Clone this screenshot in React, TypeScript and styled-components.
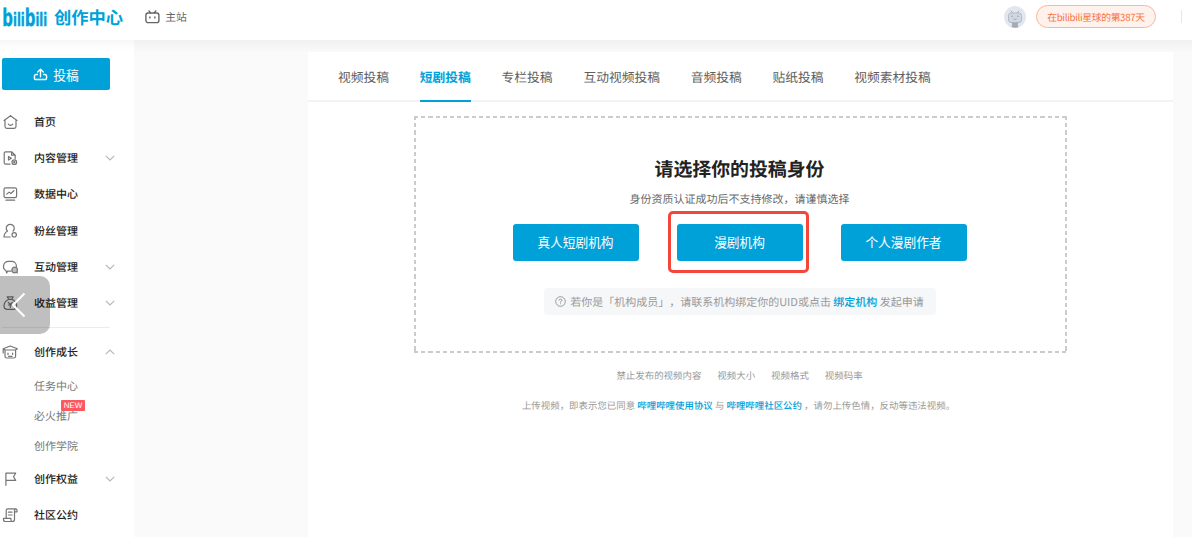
import React from "react";
import styled, { createGlobalStyle, css } from "styled-components";

const blue = "#00a1d9";

const GlobalStyle = createGlobalStyle`
  * { box-sizing: border-box; }
  body {
    margin: 0;
    overflow: hidden;
    background: #fafafa;
    font-family: "Noto Sans CJK SC", "Liberation Sans", sans-serif;
    text-rendering: geometricPrecision;
    text-spacing-trim: space-all;
  }
`;

const Page = styled.div`
  position: relative;
  display: flex;
  flex-direction: column;
  width: 1192px;
  height: 537px;
  overflow: hidden;
`;

const Header = styled.header`
  display: flex;
  align-items: center;
  flex: 0 0 40px;
  height: 40px;
  padding: 0 10px 7px 2px;
  background: #fff;
`;

const Logo = styled.div`
  display: flex;
  align-items: center;
  color: ${blue};
`;

const LogoName = styled.span`
  margin-left: 3px;
  font-size: 17.3px;
  font-weight: 700;
  line-height: 24px;
  white-space: nowrap;
`;

const MainSite = styled.a`
  display: flex;
  align-items: center;
  gap: 5px;
  margin-left: 22px;
  color: #666;
  font-size: 10.8px;
  line-height: 16px;
`;

const HeaderRight = styled.div`
  display: flex;
  align-items: center;
  margin-left: auto;
`;

const DayBadge = styled.span`
  display: flex;
  align-items: center;
  justify-content: center;
  width: 120px;
  height: 23px;
  margin-left: 10px;
  border: 1px solid #fbb599;
  border-radius: 12px;
  background: #fff1ec;
  color: #f8743f;
  font-size: 9.8px;
  letter-spacing: -0.35px;
  white-space: nowrap;
`;

const HeaderDivider = styled.span`
  width: 1px;
  height: 13px;
  margin-left: 25px;
  background: #e7e7e7;
`;

const Body = styled.div`
  display: flex;
  flex: 1;
  min-height: 0;
  background: linear-gradient(#f1f1f1, #fafafa 13px);
`;

const Sidebar = styled.aside`
  flex: 0 0 134px;
  padding: 18px 16px 0 2px;
  background: linear-gradient(#f7f7f7, #fff 10px);
`;

const SubmitButton = styled.button`
  display: flex;
  align-items: center;
  justify-content: center;
  gap: 5px;
  width: 108px;
  height: 32px;
  margin: 0 0 13.5px;
  padding: 0;
  border: 0;
  border-radius: 2px;
  background: ${blue};
  color: #fff;
  font-family: inherit;
  font-size: 12.8px;
`;

const NavItem = styled.div`
  display: flex;
  align-items: center;
  height: 36.3px;
  color: #222;
  font-size: 11px;
  font-weight: 500;
`;

const NavIcon = styled.span`
  display: flex;
  width: 32px;
  color: #757575;
`;

const Arrow = styled.span`
  display: flex;
  margin-left: auto;
  margin-right: 3px;
  color: #b5b5b5;
`;

const NavRule = styled.div`
  width: 108px;
  height: 1px;
  margin: 6px 0 6px;
  background: #ececec;
`;

const SubNav = styled.div`
  padding-left: 32px;
`;

const SubItem = styled.div`
  position: relative;
  display: flex;
  align-items: center;
  width: 46px;
  height: 30px;
  color: #777;
  font-size: 11px;
`;

const NewTag = styled.span`
  position: absolute;
  left: 27px;
  top: -1px;
  width: 24px;
  height: 11px;
  border-radius: 1px;
  background: #fb595f;
  color: #fff;
  font-family: "Liberation Sans", sans-serif;
  font-size: 8px;
  line-height: 11px;
  text-align: center;
`;

const Main = styled.main`
  flex: 1;
  padding: 12px 19px 0 174px;
`;

const Panel = styled.section`
  display: flex;
  flex-direction: column;
  align-items: center;
  height: 100%;
  background: #fff;
`;

const Tabs = styled.nav`
  display: flex;
  gap: 30.8px;
  width: 100%;
  height: 50px;
  padding-left: 30px;
  border-bottom: 2px solid #f3f3f3;
`;

const Tab = styled.a<{ $active?: boolean }>`
  height: 50px;
  border-bottom: 2px solid transparent;
  color: #606060;
  font-size: 12.75px;
  line-height: 50px;
  white-space: nowrap;
  ${({ $active }) =>
    $active &&
    css`
      border-bottom-color: ${blue};
      color: ${blue};
      font-weight: 700;
    `}
`;

const dashX = "repeating-linear-gradient(90deg, #cbcbcb 0 4.2px, transparent 4.2px 7.2px)";
const dashY = "repeating-linear-gradient(180deg, #cbcbcb 0 4.2px, transparent 4.2px 7.2px)";

const IdentityBox = styled.div`
  display: flex;
  flex-direction: column;
  align-items: center;
  width: 653px;
  height: 237px;
  margin-top: 14px;
  padding: 38px 2px 0 0;
  background:
    ${dashX} top / 100% 2px no-repeat,
    ${dashX} bottom / 100% 2px no-repeat,
    ${dashY} left / 2px 100% no-repeat,
    ${dashY} right / 2px 100% no-repeat;
`;

const Title = styled.h1`
  margin: 0;
  color: #222;
  font-size: 18.9px;
  font-weight: 700;
  line-height: 30px;
`;

const Subtitle = styled.p`
  margin: 6px 0 0;
  color: #6a6a6a;
  font-size: 11px;
  line-height: 18px;
`;

const Choices = styled.div`
  display: flex;
  gap: 38px;
  margin-top: 15.5px;
`;

const ChoiceButton = styled.button`
  position: relative;
  width: 126px;
  height: 37px;
  padding: 0 0 1px;
  border: 0;
  border-radius: 3px;
  background: ${blue};
  color: #fff;
  font-family: inherit;
  font-size: 12.7px;
`;

const Highlight = styled.span`
  position: absolute;
  inset: -13px -6px -12px -9px;
  border: 3px solid #f4473a;
  border-radius: 5px;
`;

const Notice = styled.div`
  display: flex;
  align-items: center;
  justify-content: center;
  width: 392px;
  height: 27px;
  margin-top: 27.5px;
  border-radius: 3px;
  background: #f6f7f9;
  color: #999;
  font-size: 11px;
  white-space: pre;
  svg { margin-right: 4px; }
`;

const BlueLink = styled.a`
  color: ${blue};
  font-weight: 500;
`;

const Rules = styled.div`
  display: flex;
  gap: 16px;
  margin-top: 13.5px;
  padding-right: 2px;
  color: #999;
  font-size: 9.45px;
  line-height: 16px;
`;

const Terms = styled.p`
  margin: 14px 0 0;
  padding-right: 4px;
  color: #999;
  font-size: 9.45px;
  line-height: 16px;
  white-space: pre;
`;

const BackOverlay = styled.button`
  position: absolute;
  left: 0;
  top: 276px;
  display: flex;
  align-items: center;
  width: 50px;
  height: 58px;
  padding: 0 0 0 10px;
  border: 0;
  border-radius: 0 10px 10px 0;
  background: rgba(0, 0, 0, 0.25);
  color: #fff;
`;

const Svg = ({ children, size = 16, w = 1.2 }: { children: React.ReactNode; size?: number; w?: number }) => (
  <svg width={size} height={size} viewBox="0 0 16 16" fill="none" stroke="currentColor" strokeWidth={w} strokeLinecap="round" strokeLinejoin="round">
    {children}
  </svg>
);

const icons = {
  home: <><path d="M8.5 1.7 2 6.5h1V12.5q0 1.8 1.8 1.8h7.4q1.8 0 1.8-1.8V6.5h1L8.5 1.7" /><path d="M6.3 10.2q2.2 2.4 4.4 0" /></>,
  content: <><path d="M8 14.2H3.6Q2.2 14.2 2.2 12.8V3.2Q2.2 1.8 3.6 1.8h6L13.2 5.2v3.4M9.6 1.8v3.4h3.6M6.5 6.5v3.6l2.8-1.8z" /><circle cx="12.3" cy="12.2" r="2.3" /><circle cx="12.3" cy="12.2" r=".6" /></>,
  data: <><rect x="2" y="1.9" width="12.6" height="9.8" rx="1.6" /><path d="m4.7 8.1 2.4-2 1.8 1.4 3-2.8M4 14.2h8.7" /></>,
  fans: <><path d="M5.5 8.2A4 4 0 1 1 11 8.2M5.5 8.2Q2.1 9.8 2 14h6.2" /><circle cx="12.2" cy="11.8" r="2.2" /></>,
  chat: <><path d="M5.5 12.2 4.7 14 3.9 11.6A5 5 0 0 1 5.8 2.4h4.4a4.8 4.8 0 0 1 4.2 5M5.5 12.2h3.4" /><circle cx="12.7" cy="11" r="2.8" fill="#bdbdbd" /><path d="m14.2 13.2 1.2.8" /></>,
  money: <><path d="M5.2 1.8h6L9.8 4.3H6.7zM6.7 4.3Q2 6.6 2 11q0 3.3 3.5 3.3h5.7q3.5 0 3.5-3.3 0-4.5-4.9-6.7" /><path d="m6.3 7.3 2 2.2 2-2.2M8.3 9.5v3M6.4 10h3.8" /></>,
  growth: <><path d="M1.2 4.8 8.2 2l7.2 2.8-2 1.2H3.2zM3 6.2v6q0 1.8 1.8 1.8h7q1.8 0 1.8-1.8v-6M6 9.2v1.2M10.6 9.2v1.2M6.5 12.3h3.6M1.2 5v4" /></>,
  flag: <path d="M3.9 14.3V2.2h9.8l-2.2 3.6 2.2 3.6H3.9" />,
  rules: <path d="M4.2 11.2V3.3q0-1.5 1.5-1.5h8q1.3 0 1.3 1.5v1.5h-2.5M13.7 1.8q-1.2.2-1.2 2v8.7q0 2-2 2H3.2q-1.7 0-1.7-1.7v-1.4h7.4v1.4q0 1.7 1.6 1.7M6.4 5.2H10M6.4 8H10" />,
};

const Chevron = ({ up }: { up?: boolean }) => (
  <Arrow>
    <svg width="10" height="6" viewBox="0 0 10 6" fill="none" stroke="currentColor" strokeWidth="1.1">
      <path d={up ? "M.8 5.2 5 1l4.2 4.2" : "M.8.8 5 5 9.2.8"} />
    </svg>
  </Arrow>
);

const Item = ({ icon, label, arrow }: { icon: keyof typeof icons; label: string; arrow?: "up" | "down" }) => (
  <NavItem>
    <NavIcon><Svg>{icons[icon]}</Svg></NavIcon>
    {label}
    {arrow && <Chevron up={arrow === "up"} />}
  </NavItem>
);

const tabs = ["视频投稿", "短剧投稿", "专栏投稿", "互动视频投稿", "音频投稿", "贴纸投稿", "视频素材投稿"];

export default function App() {
  return (
    <>
      <GlobalStyle />
      <Page>
        <Header>
          <Logo>
            <svg width="49" height="26" viewBox="0 0 49 26" overflow="visible">
              <text transform="translate(.3 22.2) scale(.62 1)" fill="currentColor" stroke="currentColor" strokeWidth=".4" fontFamily="DejaVu Sans" fontWeight="700" fontSize="18.5">
                <tspan fontSize="24">b</tspan>ili<tspan fontSize="24">b</tspan>ili
              </text>
            </svg>
            <LogoName>创作中心</LogoName>
          </Logo>
          <MainSite>
            <svg width="15" height="14" viewBox="0 0 15 14" fill="none" stroke="#666" strokeWidth="1.4" strokeLinecap="round">
              <rect x=".9" y="3" width="13" height="9.6" rx="2.2" />
              <path d="m4 .9 1.4 1.8M10.8.9 9.4 2.7M4.9 7v1M9.9 7v1" />
            </svg>
            主站
          </MainSite>
          <HeaderRight>
            <svg width="22" height="22" viewBox="0 0 22 22">
              <circle cx="11" cy="11" r="11" fill="#e2e6ef" />
              <rect x="4.5" y="7" width="13" height="9.5" rx="2.5" fill="#d1d7e0" stroke="#b4bcc8" />
              <path d="m7 4.8 1.5 2M15 4.8l-1.5 2M7 10.5l2-.5M15 10.5l-2-.5M9.5 13q1.5 1 3 0" fill="none" stroke="#a4adba" />
              <path d="M7.5 16.5h7l-.8 1.8.8 2.8q-3.5 1.4-7 0l.8-2.8z" fill="#a3abb6" />
            </svg>
            <DayBadge>在bilibili星球的第387天</DayBadge>
            <HeaderDivider />
          </HeaderRight>
        </Header>
        <Body>
          <Sidebar>
            <SubmitButton>
              <Svg size={15} w={1.5}>
                <path d="M8 10.5V2.8M5 5.4l3-2.9 3 2.9M4.7 8H3.4Q1.5 8 1.5 10v1.4q0 2 2 2h9q2 0 2-2V10q0-2-1.9-2h-1.3" />
              </Svg>
              投稿
            </SubmitButton>
            <Item icon="home" label="首页" />
            <Item icon="content" label="内容管理" arrow="down" />
            <Item icon="data" label="数据中心" />
            <Item icon="fans" label="粉丝管理" />
            <Item icon="chat" label="互动管理" arrow="down" />
            <Item icon="money" label="收益管理" arrow="down" />
            <NavRule />
            <Item icon="growth" label="创作成长" arrow="up" />
            <SubNav>
              <SubItem>任务中心</SubItem>
              <SubItem>必火推广<NewTag>NEW</NewTag></SubItem>
              <SubItem>创作学院</SubItem>
            </SubNav>
            <Item icon="flag" label="创作权益" arrow="down" />
            <Item icon="rules" label="社区公约" />
          </Sidebar>
          <Main>
            <Panel>
              <Tabs>
                {tabs.map((t) => <Tab key={t} $active={t === "短剧投稿"}>{t}</Tab>)}
              </Tabs>
              <IdentityBox>
                <Title>请选择你的投稿身份</Title>
                <Subtitle>身份资质认证成功后不支持修改，请谨慎选择</Subtitle>
                <Choices>
                  <ChoiceButton>真人短剧机构</ChoiceButton>
                  <ChoiceButton>漫剧机构<Highlight /></ChoiceButton>
                  <ChoiceButton>个人漫剧作者</ChoiceButton>
                </Choices>
                <Notice>
                  <svg width="11" height="11" viewBox="0 0 11 11" fill="none" stroke="#999">
                    <circle cx="5.5" cy="5.5" r="4.8" />
                    <path d="M4 4.5q0-1.3 1.5-1.3T7 4.4Q7 5.2 5.5 5.8v.7M5.5 7.4v.8" />
                  </svg>
                  若你是「机构成员」，请联系机构绑定你的UID或点击 <BlueLink>绑定机构</BlueLink> 发起申请
                </Notice>
              </IdentityBox>
              <Rules>
                <span>禁止发布的视频内容</span>
                <span>视频大小</span>
                <span>视频格式</span>
                <span>视频码率</span>
              </Rules>
              <Terms>
                上传视频，即表示您已同意 <BlueLink>哔哩哔哩使用协议</BlueLink> 与 <BlueLink>哔哩哔哩社区公约</BlueLink> ，请勿上传色情，反动等违法视频。
              </Terms>
            </Panel>
          </Main>
        </Body>
        <BackOverlay>
          <svg width="16" height="26" viewBox="0 0 16 26" fill="none" stroke="currentColor" strokeWidth="2">
            <path d="M14.5 1.5 3 13l11.5 11.5" />
          </svg>
        </BackOverlay>
      </Page>
    </>
  );
}
